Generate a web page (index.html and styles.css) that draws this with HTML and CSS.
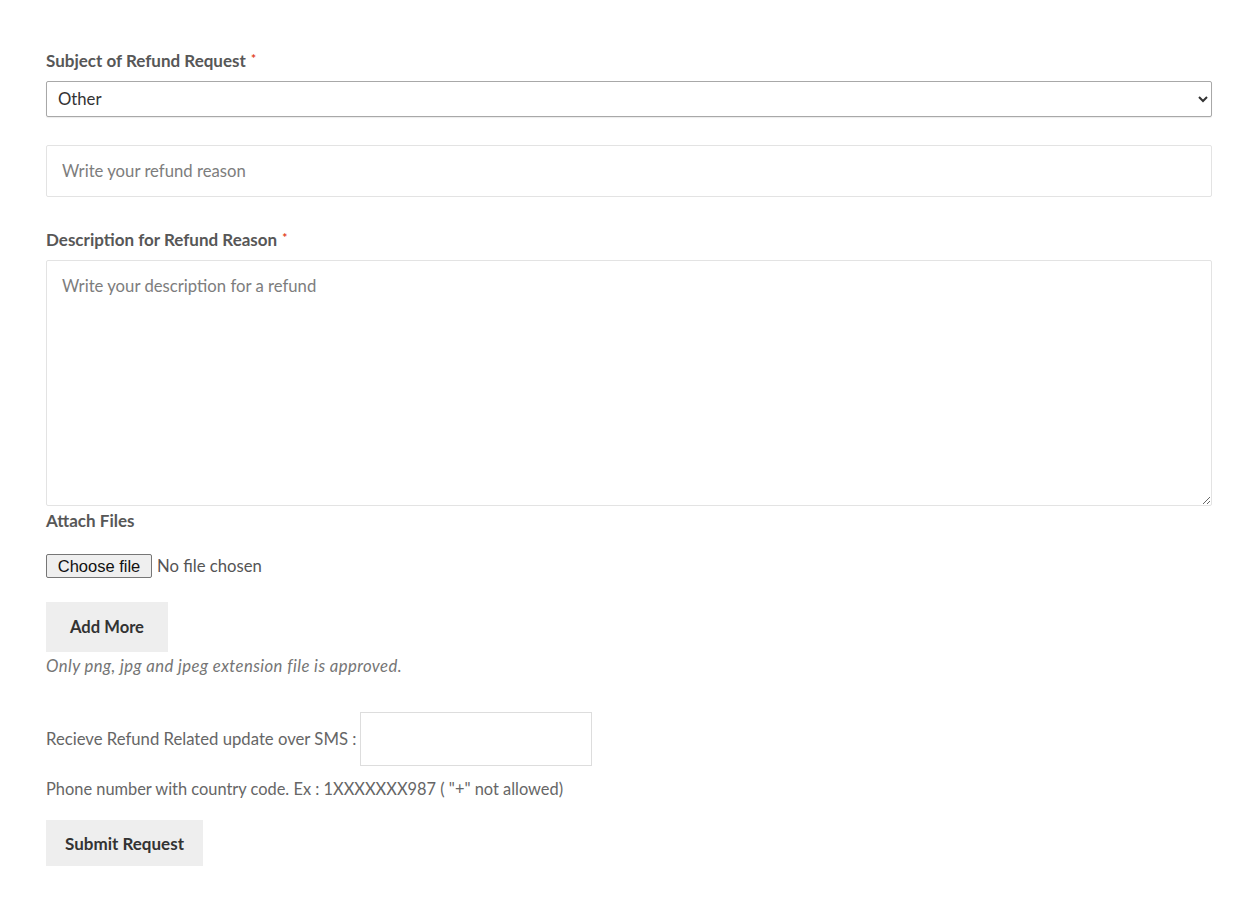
FILE: index.html
```html
<!DOCTYPE html>
<html lang="en">
<head>
<meta charset="utf-8">
<title>Refund Request</title>
<link rel="stylesheet" href="styles.css">
</head>
<body>
<form class="refund-form">
  <label class="field-label" for="subject">Subject of Refund Request <span class="req">*</span></label>
  <select id="subject" class="select">
    <option>Other</option>
  </select>
  <input class="text-input reason" type="text" placeholder="Write your refund reason">

  <label class="field-label desc-label" for="desc">Description for Refund Reason <span class="req">*</span></label>
  <textarea id="desc" class="textarea" placeholder="Write your description for a refund"></textarea>

  <div class="field-label attach-label">Attach Files</div>
  <div class="file-row">
    <label class="file-btn">Choose file<input class="file-input" type="file"></label>
    <span class="file-status">No file chosen</span>
  </div>
  <button type="button" class="btn add-more">Add More</button>
  <p class="note">Only png, jpg and jpeg extension file is approved.</p>

  <div class="sms-row">
    <span class="sms-label">Recieve Refund Related update over SMS :</span>
    <input class="sms-input" type="text">
  </div>
  <p class="hint">Phone number with country code. Ex : 1XXXXXXX987 ( "+" not allowed)</p>
  <button type="button" class="btn submit">Submit Request</button>
</form>
</body>
</html>
```
FILE: styles.css
```css
html, body {
  margin: 0;
  padding: 0;
  background: #ffffff;
}
body {
  font-family: Lato, "Open Sans", sans-serif;
  font-size: 16.7px;
  color: #555555;
}
.refund-form {
  width: 1166px;
  margin-left: 46px;
  padding-top: 49px;
  display: flex;
  flex-direction: column;
  align-items: flex-start;
}
.field-label {
  display: block;
  font-weight: 700;
  font-size: 17px;
  line-height: 24px;
  color: #575757;
}
.req {
  color: #e2401c;
  font-size: 12px;
  vertical-align: top;
  position: relative;
  top: -2px;
  margin-left: 1px;
}
.select {
  margin-top: 8px;
  width: 1166px;
  height: 36px;
  border: 1px solid #a8a8a8;
  border-radius: 2px;
  background: #ffffff;
  padding: 0 8px 0 7px;
  font-family: Lato, "Open Sans", sans-serif;
  font-size: 16.7px;
  color: #333333;
  box-shadow: 0 1px 1px rgba(0,0,0,0.08);
}
.text-input {
  margin-top: 28px;
  width: 1166px;
  height: 52px;
  box-sizing: border-box;
  border: 1px solid #e3e3e3;
  border-radius: 2px;
  padding: 0 15px;
  font-family: Lato, "Open Sans", sans-serif;
  font-size: 16.7px;
  color: #333;
  outline: none;
}
.text-input::placeholder,
.textarea::placeholder {
  color: #7d7d7d;
  opacity: 1;
}
.desc-label {
  margin-top: 31px;
}
.textarea {
  margin-top: 8px;
  width: 1166px;
  height: 246px;
  box-sizing: border-box;
  border: 1px solid #e3e3e3;
  border-radius: 2px;
  padding: 13px 15px;
  font-family: Lato, "Open Sans", sans-serif;
  font-size: 16.7px;
  line-height: 24px;
  color: #333;
  outline: none;
  resize: vertical;
}
.attach-label {
  margin-top: 3px;
}
.file-row {
  margin-top: 21px;
  height: 24px;
  display: flex;
  align-items: center;
  gap: 5px;
}
.file-btn {
  box-sizing: border-box;
  height: 24px;
  width: 106px;
  display: flex;
  align-items: center;
  justify-content: center;
  font-family: "Liberation Sans", Arial, sans-serif;
  font-size: 16.5px;
  color: #111;
  background: #efefef;
  border: 1px solid #767676;
  border-radius: 2px;
  cursor: pointer;
}
.file-input {
  display: none;
}
.file-status {
  color: #555;
  line-height: 24px;
}
.btn {
  border: none;
  background: #eeeeee;
  font-family: Lato, "Open Sans", sans-serif;
  font-weight: 700;
  font-size: 17px;
  color: #333333;
  cursor: pointer;
  padding: 0;
}
.add-more {
  margin-top: 24px;
  width: 122px;
  height: 50px;
  font-size: 16.6px;
}
.note {
  margin: 2px 0 0;
  line-height: 24px;
  font-style: italic;
  color: #757575;
  letter-spacing: 0.42px;
}
.sms-row {
  margin-top: 34px;
  display: flex;
  align-items: center;
  gap: 4px;
}
.sms-label {
  color: #666666;
  line-height: 24px;
}
.sms-input {
  width: 232px;
  height: 54px;
  box-sizing: border-box;
  border: 1px solid #dddddd;
  outline: none;
  font-size: 16px;
}
.hint {
  margin: 11px 0 0;
  line-height: 24px;
  color: #666666;
  font-size: 16.4px;
}
.submit {
  margin-top: 19px;
  width: 157px;
  height: 46px;
}
```
